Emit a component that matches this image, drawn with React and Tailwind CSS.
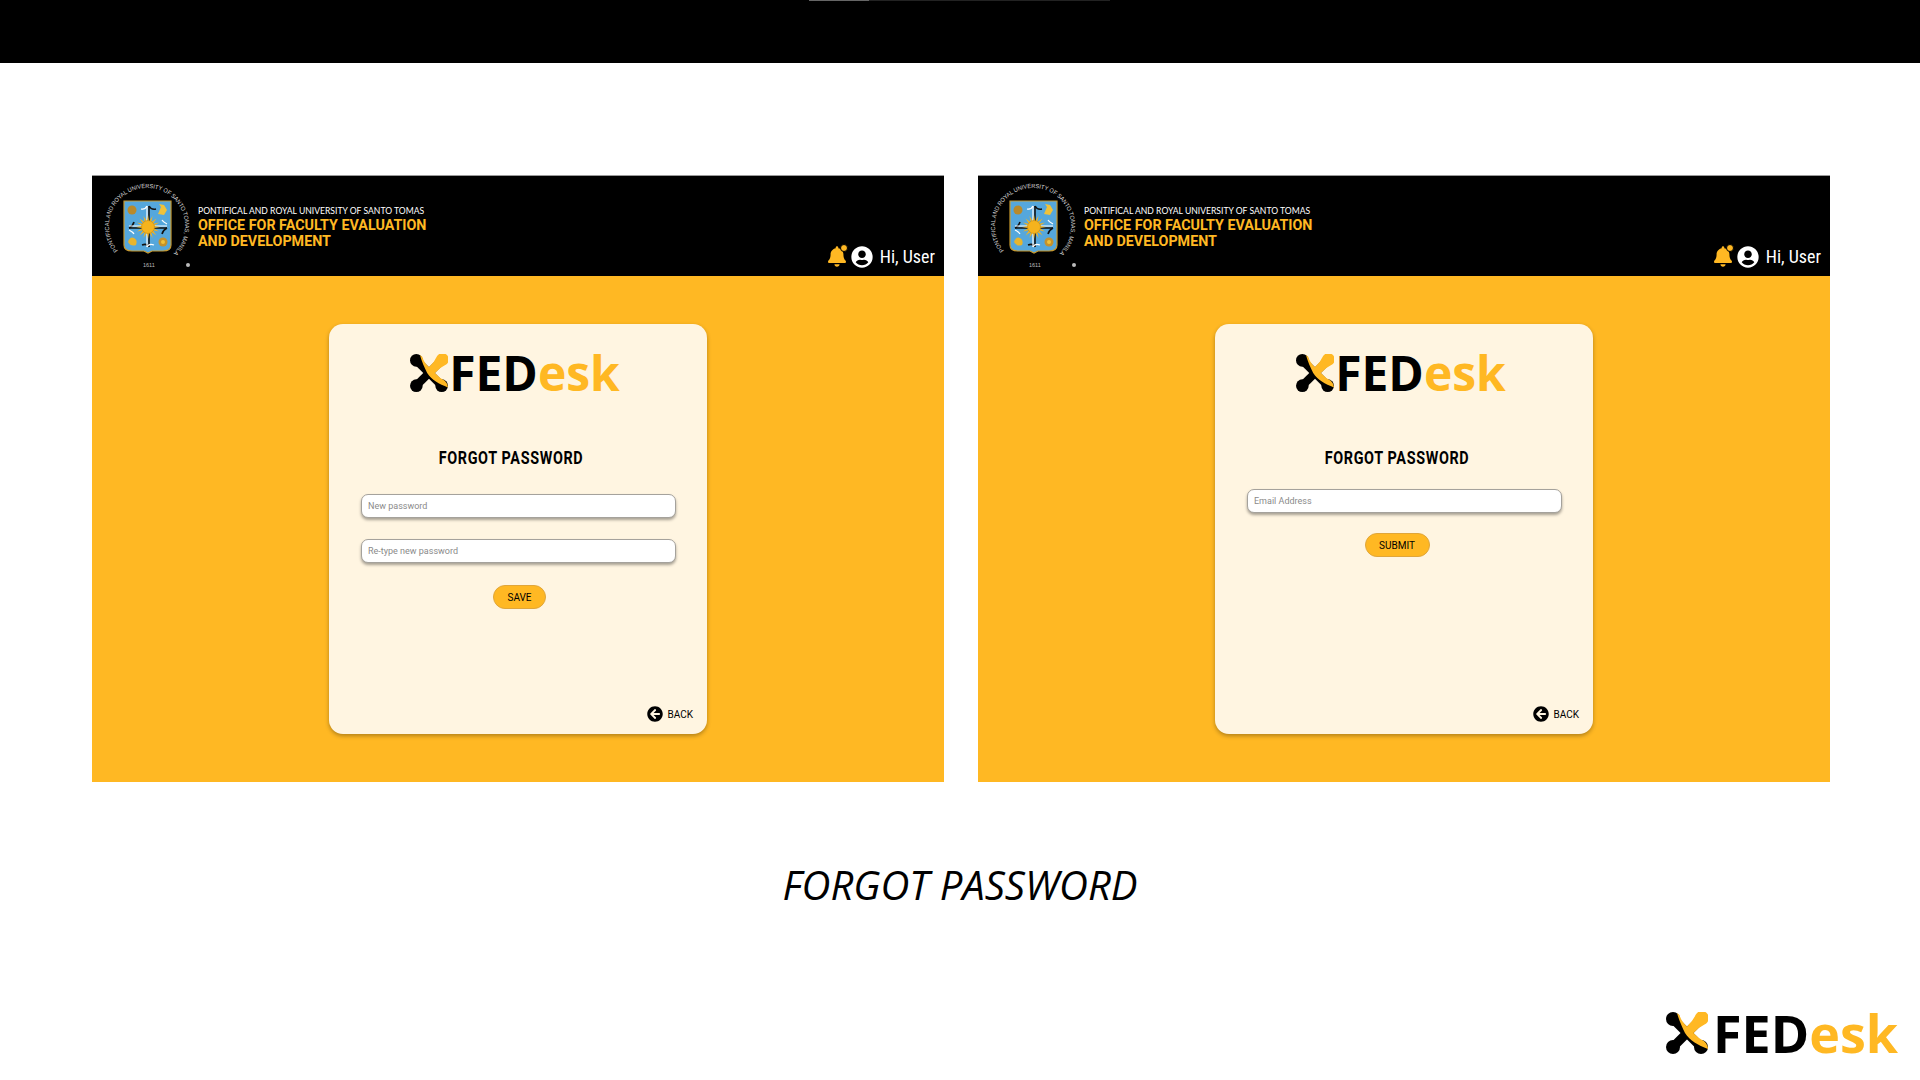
import { FaArrowCircleLeft, FaBell, FaUserCircle } from 'react-icons/fa';

function LogoMark({ className }) {
	return (
		<svg viewBox="0 0 42 42" className={className}>
			<g stroke="#000" strokeWidth="9" fill="none">
				<path d="M7 7 L35 35" />
				<path d="M7 35 L35 7" />
			</g>
			<circle cx="7" cy="7" r="7" fill="#000" />
			<circle cx="7" cy="35" r="7" fill="#000" />
			<circle cx="35" cy="35" r="7" fill="#000" />
			<path
				d="M11 1 L13.5 3 Q15 9 21 14.5 Q27 9 29.5 3 A7 7 0 1 1 38.5 12.5 Q33 15 27.5 21 Q33 27 38.5 29.5 Q42 33 42 37 C32 33 24 29 19 21 C16 15 13 8 11 1 Z"
				fill="#ffb823"
			/>
		</svg>
	);
}

function Logo({ size }) {
	const big = size === 'big';
	return (
		<div
			className={`flex items-center font-['Open_Sans',sans-serif] font-bold ${
				big ? 'text-[52px] h-[62px]' : 'text-[48px] h-[56px]'
			}`}
		>
			<LogoMark
				className={big ? 'w-[42px] h-[42px] mr-[5px]' : 'w-[38px] h-[38px] mr-[1px]'}
			/>
			<span className="text-black">FED</span>
			<span className="text-[#ffb823]">esk</span>
		</div>
	);
}

function Seal() {
	const rays = Array.from({ length: 16 }, (_, i) => i * 22.5);
	return (
		<svg viewBox="0 0 100 100" className="w-[100px] h-[100px] shrink-0">
			<defs>
				<path id="sealRing" d="M19.9 68.4 A38 38 0 1 1 73.4 73.1" />
			</defs>
			<text fontSize="6" fill="#d8d8d8" fontFamily="'Liberation Sans', sans-serif">
				<textPath href="#sealRing" textLength="176" lengthAdjust="spacingAndGlyphs">
					PONTIFICAL AND ROYAL UNIVERSITY OF SANTO TOMAS, MANILA
				</textPath>
			</text>
			<text x="45" y="85" fontSize="5.5" fill="#bbb" fontFamily="'Liberation Sans', sans-serif">
				1611
			</text>
			<circle cx="90" cy="83" r="2" fill="#bbb" />
			<g transform="translate(0 3)">
				<path
					d="M26 16 H73 V60 Q73 66 65 66 H54 L50 68 L46 66 H34 Q26 66 26 60 Z"
					fill="#55a7dc"
					stroke="#c99a2e"
					strokeWidth="1.2"
				/>
				<g stroke="#111" strokeWidth="1.6" fill="none">
					<path d="M51 21 V62" />
					<path d="M31 43 H69" />
					<path d="M51 21 Q53 25 58 24" />
					<path d="M51 62 Q49 58 44 60" />
					<path d="M31 43 Q35 41 36 37" />
					<path d="M69 43 Q65 45 64 49" />
				</g>
				<g stroke="#fff" strokeWidth="1.2" fill="none">
					<path d="M49 21 V62" />
					<path d="M31 41 H69" />
					<path d="M49 21 Q47 25 43 24" />
					<path d="M49 62 Q51 58 56 60" />
					<path d="M31 45 Q35 47 36 49" />
					<path d="M69 39 Q65 37 64 35" />
				</g>
				{rays.map((r) => (
					<path
						key={r}
						d="M50 30 L52 42 L48 42 Z"
						transform={`rotate(${r} 50 42)`}
						fill="#f5b31d"
					/>
				))}
				<circle cx="50" cy="42" r="6.5" fill="#f5b31d" stroke="#b98212" strokeWidth=".5" />
				<circle cx="34" cy="25" r="4.5" fill="#b98a2a" />
				<path d="M60 29 L63 22 L61 19 L66 20 L69 25 L66 30 Z" fill="#f0c23a" />
				<path d="M30 57 Q32 51 36 53 Q40 55 38 60 Q33 62 30 57 Z" fill="#e8b52d" />
				<circle cx="65" cy="57" r="4.5" fill="#c4922c" />
				<circle cx="65" cy="57" r="2" fill="#f0c23a" />
			</g>
		</svg>
	);
}

function Panel({ children, paddingTop }) {
	return (
		<div className="w-[852px] h-[607px] bg-[#ffb823] flex flex-col border-t border-[#9a9a9a]">
			<div className="h-[100px] bg-black flex justify-between shrink-0">
				<div className="flex items-start pl-[6px] pt-[6px]">
					<Seal />
					<div className="pt-[23px]">
						<p className="font-['Lato',sans-serif] text-[8.6px] leading-[12px] text-white whitespace-nowrap">
							PONTIFICAL AND ROYAL UNIVERSITY OF SANTO TOMAS
						</p>
						<p className="font-['Roboto',sans-serif] font-bold text-[14.3px] leading-[16px] text-[#ffb823] whitespace-nowrap">
							OFFICE FOR FACULTY EVALUATION
							<br />
							AND DEVELOPMENT
						</p>
					</div>
				</div>
				<div className="flex items-center self-end pr-[9px] pb-[6px]">
					<div className="relative mr-[5px]">
						<FaBell className="text-[#ffb823] w-[18px] h-[23px]" />
						<span className="absolute -top-[1px] -right-[2px] w-[8px] h-[8px] rounded-full bg-[#ffb823] border border-black" />
					</div>
					<FaUserCircle className="text-white w-[22px] h-[22px] mr-[7px]" />
					<span className="font-['Roboto',sans-serif] text-white text-[18px] [font-stretch:85%]">
						Hi, User
					</span>
				</div>
			</div>
			<div className="flex justify-center pt-[48px]">
				<div className="w-[378px] h-[410px] bg-[#fff5e1] rounded-[14px] shadow-[0_2px_4px_rgba(0,0,0,0.3)] flex flex-col px-[32px] pt-[21px] pb-[12px]">
					<div className="flex justify-center mr-[6px]">
						<Logo size="small" />
					</div>
					<h2 className="mt-[46px] mr-[14px] text-center font-['Roboto',sans-serif] font-bold text-[18px] leading-[22px] tracking-[0.8px] text-black scale-x-[0.8]">
						FORGOT PASSWORD
					</h2>
					<div className={paddingTop}>{children}</div>
					<div className="mt-auto -mr-[18px] flex items-center justify-end">
						<FaArrowCircleLeft className="w-[16px] h-[16px] text-black mr-[5px]" />
						<span className="font-['Roboto',sans-serif] text-[10px] text-black">BACK</span>
					</div>
				</div>
			</div>
		</div>
	);
}

function Field({ placeholder }) {
	return (
		<input
			className="block w-[315px] h-[24px] bg-white rounded-[7px] border border-[#a5a29c] shadow-[0_2px_3px_rgba(0,0,0,0.35)] px-[6px] font-['Roboto',sans-serif] text-[9px] placeholder:text-[#8a8a8a] outline-none"
			placeholder={placeholder}
			type="text"
		/>
	);
}

function PillButton({ label, width }) {
	return (
		<button
			className={`${width} h-[24px] rounded-full bg-[#ffb823] border border-[#e0a63a] font-['Roboto',sans-serif] text-[10px] text-black`}
		>
			{label}
		</button>
	);
}

export default function App() {
	return (
		<div className="h-screen overflow-hidden bg-white flex flex-col">
			<div className="h-[63px] bg-black shrink-0 flex items-start pl-[809px]">
				<div className="w-[60px] h-px bg-[#666]" />
				<div className="w-[241px] h-px bg-[#222]" />
			</div>

			<div className="flex pl-[92px] gap-[34px] pt-[112px]">
				<Panel paddingTop="pt-[25px]">
					<Field placeholder="New password" />
					<div className="mt-[21px]">
						<Field placeholder="Re-type new password" />
					</div>
					<div className="flex justify-center mt-[22px] mr-[-3px]">
						<PillButton label="SAVE" width="w-[53px]" />
					</div>
				</Panel>
				<Panel paddingTop="pt-[20px]">
					<Field placeholder="Email Address" />
					<div className="flex justify-center mt-[20px] mr-[14px]">
						<PillButton label="SUBMIT" width="w-[65px]" />
					</div>
				</Panel>
			</div>

			<h1 className="mt-[78px] text-center font-['Open_Sans',sans-serif] italic text-[40px] leading-[50px] text-black">
				FORGOT PASSWORD
			</h1>

			<div className="mt-auto flex justify-end pr-[22px] pb-[16px]">
				<Logo size="big" />
			</div>
		</div>
	);
}
